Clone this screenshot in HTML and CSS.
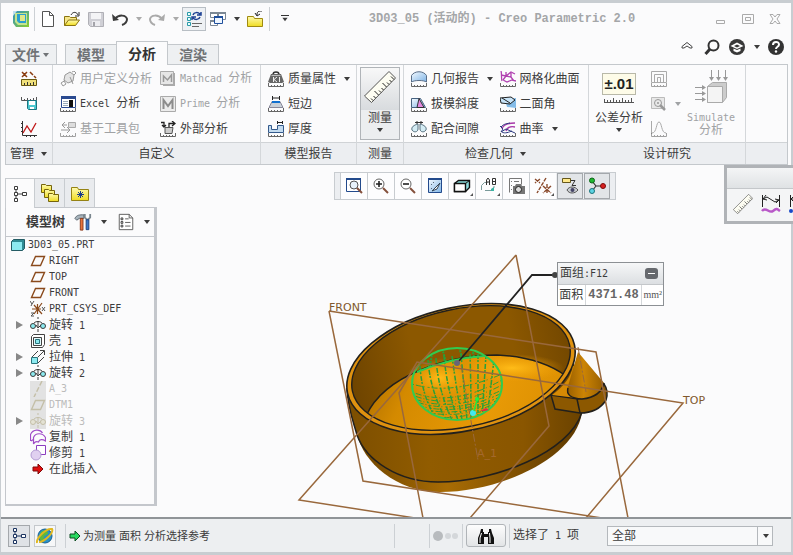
FILE: index.html
```html
<!DOCTYPE html>
<html lang="zh-CN">
<head>
    <meta charset="UTF-8">
    <meta name="viewport" content="width=device-width, initial-scale=1.0">
    <title>3D03_05 (活动的) - Creo Parametric 2.0</title>
    <link rel="stylesheet" href="styles.css">
</head>
<body>
<!-- 图标 -->
<svg class="sprite" aria-hidden="true">
    <defs>
        <linearGradient id="g-folder" x1="0" y1="0" x2="0" y2="1"><stop offset="0" stop-color="#fffbb0"/><stop offset="1" stop-color="#f0dc20"/></linearGradient>
        <linearGradient id="g-logo" x1="0" y1="0" x2="1" y2="1"><stop offset="0" stop-color="#2f8fc4"/><stop offset="1" stop-color="#8ccf2c"/></linearGradient>
        <linearGradient id="g-blue" x1="0" y1="0" x2="1" y2="1"><stop offset="0" stop-color="#f4faff"/><stop offset="1" stop-color="#7fb4e6"/></linearGradient>
    </defs>
    <symbol id="ticks" viewBox="0 0 16 16"><path d="M.5 12v3.5h15V12M3.5 14v1M6.5 14v1M9.5 14v1M12.5 14v1" fill="none" stroke="#666"/></symbol>
    <symbol id="down" viewBox="0 0 8 8"><path d="M1 2h6L4 6z" fill="currentColor"/></symbol>
    <symbol id="logo" viewBox="0 0 16 16"><path d="M0 0h16v16H3L0 12z" fill="url(#g-logo)"/><path d="M2 2h12v12H5L2 11z" fill="#c4e48c"/><path d="M4 3h9v9H6L4 10z" fill="#2a9fd0"/><path d="M7 4h5v6H7z" fill="#e0e888"/><path d="M0 0h4l-4 5z" fill="#bfe0f0"/></symbol>
    <symbol id="new" viewBox="0 0 16 16"><path d="M2.5.5h7l4 4v11h-11z" fill="#fff" stroke="#555"/><path d="M9.5.5v4h4" fill="none" stroke="#555"/></symbol>
    <symbol id="open" viewBox="0 0 16 16"><path d="M.5 14.5v-9h5l1 1h6v3" fill="#f6e68a" stroke="#8a7410"/><path d="M.5 14.5l4-5.5h11l-4 5.5z" fill="url(#g-folder)" stroke="#8a7410"/><path d="M7 4c2-4 6-3 7 0m1-3v4h-4" fill="none" stroke="#333"/></symbol>
    <symbol id="save" viewBox="0 0 16 16"><path d="M.5 1.5h15v14h-13l-2-2z" fill="#d0d0d6" stroke="#b0b0b6"/><path d="M3 2h10v6H3z" fill="#f4f4f6"/><path d="M4 10h8v5H4z" fill="#ececf0"/><path d="M5 11h2v4H5z" fill="#a4a4aa"/></symbol>
    <symbol id="undo" viewBox="0 0 16 16"><path d="M3 8c4-5 11-4 12 0 0 3-2 5-5 6" fill="none" stroke="currentColor" stroke-width="2"/><path d="M0 3l1 7 6-1z" fill="currentColor"/></symbol>
    <symbol id="regen" viewBox="0 0 16 16"><path d="M1.500 1.500h3v3h-3zM1.500 6.500h3v3h-3zM1.500 11.500h3v3h-3z" fill="#e8ffff" stroke="#2a9aa8"/><path d="M7 4c1-3 5-3 7-1m1-2v3h-4M14 6c-1 3-5 3-7 1M6 9V6h4" fill="none" stroke="#1b3f92" stroke-width="1.5"/><path d="M6 12.500h10M6 15.500h7" stroke="#666"/></symbol>
    <symbol id="windows" viewBox="0 0 16 16"><path d="M.5 1.5h8v5h-8zM7.5 2.5h8v6h-8zM.5 9.500h7v5h-7z" fill="#fff" stroke="#7c8894"/><path d="M0 1h9v2H0zM8 1h8v2H8zM0 9h8v2H0z" fill="#7c8894"/><path d="M4.500 5.500h8v7h-8z" fill="#eef6ff" stroke="#1f4f9c"/><path d="M4 5h9v2H4z" fill="#1f4f9c"/></symbol>
    <symbol id="closefolder" viewBox="0 0 16 16"><path d="M.5 15.500v-10h6l1 2h8v8z" fill="url(#g-folder)" stroke="#a08a10"/><path d="M15 0c-4 0-5 1-5 4m-2-2l2 3 3-2" fill="none" stroke="#222"/></symbol>
    <symbol id="collapse" viewBox="0 0 16 16"><path d="M3 7.500l5-4 5 4v1.500h-2L8 7l-3 2H3z" fill="none" stroke="#444"/></symbol>
    <symbol id="search" viewBox="0 0 16 16"><circle cx="9.500" cy="6.500" r="5" fill="none" stroke="#333" stroke-width="2"/><path d="M6 10l-4.500 5" stroke="#333" stroke-width="3"/></symbol>
    <symbol id="learn" viewBox="0 0 16 16"><circle cx="8" cy="8" r="8" fill="#383838"/><path d="M1.500 7L8 3.500 14.500 7 8 10z" fill="#fff"/><path d="M4.500 9.500L8 11l3.500-1.500V12L8 13.500 4.500 12z" fill="#fff"/><path d="M5 7l3-1.500L11 7 8 8.500z" fill="#383838"/></symbol>
    <symbol id="help" viewBox="0 0 16 16"><circle cx="8" cy="8" r="8" fill="#333"/><path d="M5 6c0-4 6-4 6-.5C11 8 8 7.500 8 10" fill="none" stroke="#fff" stroke-width="2"/><circle cx="8" cy="12.500" r="1.200" fill="#fff"/></symbol>
    <symbol id="min" viewBox="0 0 12 12"><path d="M1.500 7.500h8v3h-8z" fill="none" stroke="#aaa"/></symbol>
    <symbol id="max" viewBox="0 0 12 12"><path d="M.5 1.500h11v9H.5zM3.500 4.500h5v3h-5z" fill="none" stroke="#aaa"/></symbol>
    <symbol id="close" viewBox="0 0 12 12"><path d="M1 1.500h3l2 2.500 2-2.500h3L8 6l3 4.500H8L6 8l-2 2.500H1L4 6z" fill="none" stroke="#aaa"/></symbol>

    <symbol id="m-units" viewBox="0 0 16 16"><path d="M1 1l5 5M6 1L1 6M9 1l3 3m1 1l2 2" stroke="#8a3c10" stroke-width="1.5"/><path d="M.5 8.500h15v6H.5z" fill="#f0e07a" stroke="#6a5a10"/><path d="M3.500 12v2M6.500 11v3M9.500 12v2M12.500 11v3" stroke="#333"/></symbol>
    <symbol id="m-save" viewBox="0 0 16 16"><path d="M.5 1v3.500h15V1M3.500 3v1M6.500 2v2M9.500 3v1M12.500 2v2" fill="none" stroke="#555"/><path d="M6.500 4.500h9v9h-8l-1-1z" fill="#4cc8d0" stroke="#1c7480"/><path d="M8 5h6v4H8zM9 11h4v2H9z" fill="#fff"/></symbol>
    <symbol id="m-graph" viewBox="0 0 16 16"><path d="M1.500 0v14.500H16M0 2.500h1M0 6.500h1M0 10.500h1M5.500 15v1M9.500 15v1M13.500 15v1" stroke="#333" fill="none"/><path d="M2 12l4-7 4 6 5-9" stroke="#c01818" stroke-width="1.300" fill="none"/></symbol>
    <symbol id="user" viewBox="0 0 16 16"><path d="M5 4l5-3 4 3-1 6-5 2-4-3z" fill="#e4e4e4" stroke="#999"/><path d="M1 12l3-2 2 3-3 2zM12 1l2-1 2 2-2 2M5 9l-2 2M10 6l3 7" fill="none" stroke="#999"/></symbol>
    <symbol id="excel" viewBox="0 0 16 16"><path d="M1.500 1.500h14v10h-14z" fill="#fff" stroke="#2a4a90"/><path d="M1 0h15v3H1z" fill="#2a4a90"/><path d="M3 5.500h5M3 7.500h5M3 9.500h5" stroke="#9ab"/><path d="M9 4h4v7H9z" fill="#111"/><use href="#ticks"/></symbol>
    <symbol id="toolkit" viewBox="0 0 16 16"><path d="M8.500 1.500h7v5h-7z" fill="#ddd" stroke="#aaa"/><path d="M7 4H2m3-3L2 4l3 3M1 9h9M7 6l3 3-3 3" stroke="#999" fill="none"/><use href="#ticks" opacity=".6"/></symbol>
    <symbol id="mathcad" viewBox="0 0 16 16"><path d="M.5.5h13v13H.5z" fill="#e6e6e6" stroke="#aaa"/><path d="M13 2h2v13H3v-2h10z" fill="#aaa"/><path d="M3.500 11V5l4 4 4-5v7" stroke="#999" stroke-width="1.5" fill="none"/></symbol>
    <symbol id="prime" viewBox="0 0 16 16"><path d="M.5.5h15v15H.5z" fill="#ececec" stroke="#aaa"/><path d="M3.500 13V4L8 10l4.500-6v9" stroke="#8c8c8c" stroke-width="2" fill="none"/></symbol>
    <symbol id="external" viewBox="0 0 16 16"><path d="M5 6.500h8l-1 6H5z" fill="#ccc" stroke="#555"/><path d="M1 1.500h3v4M2 4l2 2 2-2M9 6V2.500h5M12 0l3 2.500L12 5" stroke="#222" stroke-width="1.300" fill="none"/><use href="#ticks"/></symbol>
    <symbol id="mass" viewBox="0 0 16 16"><path d="M5 3.500C5 0 11 0 11 3.500" stroke="#333" stroke-width="1.5" fill="none"/><path d="M3 3h10l3 8-2 1H2l-2-1z" fill="#666"/><path d="M3 4h10l-1 1H4z" fill="#bbb"/><path d="M5.500 6v5M9 6L6 8.500 9 11M11.500 6v5" stroke="#eee" fill="none"/><use href="#ticks"/></symbol>
    <symbol id="short" viewBox="0 0 16 16"><path d="M4.500 0v4M11.500 0v4M5 2h6" stroke="#222"/><path d="M4 5.500h8l3 6H1z" fill="#c8d0d8" stroke="#889"/><path d="M4 6h8" stroke="#1070d0" stroke-width="2"/><use href="#ticks"/></symbol>
    <symbol id="thick" viewBox="0 0 16 16"><path d="M.5 4.500h3v4h6v-4h6v7H.5z" fill="#c4dcf0" stroke="#345a8c"/><path d="M9.500 0v3M14.500 0v3M10 1.500h4" stroke="#222"/><use href="#ticks"/></symbol>
    <symbol id="geom" viewBox="0 0 16 16"><path d="M.5 11V4.500c3-5 12-5 15 0V11c-3-2-12-2-15 0z" fill="url(#g-blue)" stroke="#5a6e88"/><use href="#ticks"/></symbol>
    <symbol id="draft" viewBox="0 0 16 16"><path d="M.5 2.500h9l5 9H.5z" fill="url(#g-blue)" stroke="#46617e"/><path d="M8 2.500l5 9H6z" fill="#e58ae0" stroke="#333"/><use href="#ticks"/></symbol>
    <symbol id="clear" viewBox="0 0 16 16"><path d="M7 3c-4 1-7 3-6 6 2 3 6 2 6-1zM9 3c4 1 7 3 6 6-2 3-6 2-6-1z" fill="#d4ecf4" stroke="#56707e"/><path d="M4 1.500h8M6 0v3M10 0v3" stroke="#333"/><use href="#ticks"/></symbol>
    <symbol id="mesh" viewBox="0 0 16 16"><path d="M1 0c1 3 0 6 1 10m-1-6l5 1 5-4 4 2M6 1v4l-3 4m3-4l5 1 3 4m-3-4V2m-8 7l4 2 5-2 4 1" fill="none" stroke="#b040b0" stroke-width="1.300"/><use href="#ticks"/></symbol>
    <symbol id="dihedral" viewBox="0 0 16 16"><path d="M5 3l11-1v10L7 11z" fill="#84bce8"/><path d="M0 2l11-1 4 3-5 4-9-1z" fill="#c8e4f8" stroke="#222"/><path d="M2 2l8 5" stroke="#222"/><use href="#ticks"/></symbol>
    <symbol id="curv" viewBox="0 0 16 16"><path d="M15 2C8 2 3 4 2 8M15 6c-5-1-8 1-9 4" fill="none" stroke="#a838a8" stroke-width="1.300"/><path d="M0 5l3 3-2 3 5-3 9 4M1 6c3-3 4-3 9-4M2 11c3 2 7 0 10-1" fill="none" stroke="#2e3b80"/><use href="#ticks"/></symbol>
    <symbol id="sens" viewBox="0 0 16 16"><path d="M.5.5h15v11H.5zM3.500 11V3.500h9v8M6.500 11V6.500h3v5" fill="none" stroke="#aaa"/><use href="#ticks" opacity=".6"/></symbol>
    <symbol id="feas" viewBox="0 0 16 16"><path d="M.5 1.500h13v11H.5z" fill="#e8e8e8" stroke="#bbb"/><circle cx="7" cy="7" r="3.500" fill="none" stroke="#999"/><circle cx="7" cy="7" r="1" fill="#999"/><path d="M9 9l5 5" stroke="#999" stroke-width="2.500"/></symbol>
    <symbol id="stat" viewBox="0 0 16 16"><path d="M1 12C6 12 5 1 8 1s2 11 7 11M.5 0v13" fill="none" stroke="#aaa"/><use href="#ticks" opacity=".6"/></symbol>
    <symbol id="simulate" viewBox="0 0 36 36"><path d="M14.500 16.500l5-4h14v15l-4 5h-15z" fill="#ccc" stroke="#aaa"/><path d="M14.500 16.500h15v16h-15z" fill="#f4f4f4" stroke="#aaa"/><path d="M18.500 0v9M25.500 0v9M32.500 0v9M2 17.500h9M2 23.500h9M2 29.500h9" stroke="#999"/><path d="M16 7h5l-2.500 4zM23 7h5l-2.500 4zM30 7h5l-2.500 4zM9 15v5l4-2.500zM9 21v5l4-2.500zM9 27v5l4-2.500z" fill="#999"/></symbol>
    <symbol id="ruler" viewBox="0 0 32 32"><path d="M.5 25L25 .5l6.500 6.500L7.500 31.500z" fill="#fdfdf2" stroke="#555"/><path d="M9 29.500l-2-2M11.500 27l-2-2M14.500 24l-4-4M17 21.500l-2-2M19.500 19l-2-2M22.500 16l-4-4M25 13.500l-2-2M27.500 11l-2-2M30 8.500l-3-3" stroke="#222"/></symbol>
    <symbol id="curvelen" viewBox="0 0 20 20"><path d="M1.500 1v12M18.500 1v12M2 5l4-2 8 5 4-2M5 1L2 5l4 1M15 9l3-3-4-1" fill="none" stroke="#222"/><path d="M1 17c4-5 7 3 11 0s4-2 7 0" fill="none" stroke="#b858c8" stroke-width="2.500"/></symbol>
    <symbol id="dist" viewBox="0 0 20 20"><path d="M1.500 1v12M2 5h9M5 2L2 5l3 3" fill="none" stroke="#222"/><circle cx="2" cy="17" r="2" fill="#1848c8"/><path d="M4 17h14" stroke="#1848c8" stroke-width="2"/></symbol>

    <symbol id="treeicon" viewBox="0 0 16 16"><path d="M4 3v10M4 8h7" stroke="currentColor"/><path d="M2.500.5h3v3h-3zM2.500 6.500h3v3h-3zM2.500 12.500h3v3h-3zM10.500 6.500h4v3h-4z" fill="#fff" stroke="currentColor"/></symbol>
    <symbol id="folders" viewBox="0 0 20 20"><g fill="url(#g-folder)" stroke="#75640c"><path d="M1.500 9.500v-8h4l1 1h5v7z"/><path d="M4.500 14.500v-8h4l1 1h5v7z"/><path d="M8.500 18.500v-8h4l1 1h5v7z"/></g></symbol>
    <symbol id="fav" viewBox="0 0 20 20"><path d="M1.500 17.500v-13h6l1 2h10v11z" fill="url(#g-folder)" stroke="#958214"/><path d="M10.500 8v7M7 11.500h7M8 9l5 5M13 9l-5 5" stroke="#1c3c8c"/></symbol>
    <symbol id="hammer" viewBox="0 0 20 20"><path d="M1 6c2-4 5-4 10-4v4H6L3 8z" fill="#a8b4bc" stroke="#56626c"/><path d="M7 6h3v13H7z" fill="#e8743c" stroke="#883818"/><path d="M12 1v4l2 2h2l2-2V1" stroke="#7a868e" stroke-width="2" fill="none"/><path d="M13.500 7.500h3v11h-3z" fill="#3c78c8" stroke="#1a3e7c"/></symbol>
    <symbol id="list" viewBox="0 0 20 20"><path d="M2.500 1.500h11l4 4v13h-15z" fill="#fff" stroke="#555"/><path d="M13.500 1.500v4h4M9 6.500h4M9 10.500h6M9 14.500h6" stroke="#555" fill="none"/><path d="M4.500 5.500h2v2h-2zM4.500 9.500h2v2h-2zM4.500 13.500h2v2h-2z" fill="none" stroke="#333"/></symbol>
    <symbol id="part" viewBox="0 0 14 14"><path d="M.5 3.500l2-2h11v9l-2 2H.5z" fill="#2f8c94" stroke="#245c64"/><path d="M1 4h10v8H1z" fill="#8ceaf0"/></symbol>
    <symbol id="plane" viewBox="0 0 16 16"><path d="M5.500 3.500h9l-4 9h-9z" fill="none" stroke="currentColor" stroke-width="1.400"/></symbol>
    <symbol id="csys" viewBox="0 0 16 16"><path d="M2 8h9M4 4l8 9M12 2L4 13M7.500 3v10" stroke="#8a4a1c" stroke-width="1.200"/><path d="M0 0l2 3 2-3M2 3l-1 2M12 6l3 4M15 6l-3 4M1 12h3l-3 3h3" fill="none" stroke="#555"/></symbol>
    <symbol id="revolve" viewBox="0 0 16 16"><circle cx="3" cy="9" r="2.500" fill="var(--fill)" stroke="currentColor"/><circle cx="13" cy="9" r="2.500" fill="var(--fill)" stroke="currentColor"/><path d="M8 0v2M8 4v6M8 12v3M4 6c2-2 6-2 8 0M6 8l2 3 3-3" fill="none" stroke="currentColor"/></symbol>
    <symbol id="shell" viewBox="0 0 16 16"><path d="M1.500 3.500l2-2h11v10l-2 3h-11z" fill="#fff" stroke="#444"/><path d="M3.500 4.500h8v8h-8z" fill="#e4fafc" stroke="#444"/><path d="M5.500 6.500h4v4h-4z" fill="#8ceaf0" stroke="#2a747c"/></symbol>
    <symbol id="extrude" viewBox="0 0 16 16"><path d="M1.500 8.500h6v6h-6z" fill="#8ceaf0" stroke="#2a747c"/><path d="M2 8l6-6M8 14l6-6M8 8l6-6M10 1.500h4.500V6" fill="none" stroke="#444"/></symbol>
    <symbol id="axis" viewBox="0 0 16 16"><path d="M12 0L4 16" stroke="currentColor" stroke-width="1.5" stroke-dasharray="5 2"/></symbol>
    <symbol id="copy" viewBox="0 0 16 16"><path d="M.5 12V5.500C3 0 10 0 12.500 4M3.500 15V8.500c2-5 9-5 12 0V12c-3-2-6-2-7 1-2-1-4 0-5 2zM1 12l3-2" fill="none" stroke="#a04cc8" stroke-width="1.200"/></symbol>
    <symbol id="trim" viewBox="0 0 16 16"><path d="M6.500.5h9v9h-9z" fill="#fff" stroke="#8c3cc0"/><circle cx="6" cy="10" r="5" fill="#e0d0f0" stroke="#b49cd4"/></symbol>
    <symbol id="insert" viewBox="0 0 16 16"><path d="M3 6h5V3l5 5-5 5v-3H3z" fill="#e01010" stroke="#800808"/></symbol>

    <symbol id="zoomfit" viewBox="0 0 18 18"><path d="M1.500 2.500h14v12h-14z" fill="#fff" stroke="#234a8c"/><path d="M1 1h15v2H1z" fill="#234a8c"/><circle cx="9" cy="8" r="4" fill="#e8f2fa" stroke="#555"/><path d="M12 11l5 5" stroke="#84503c" stroke-width="2"/></symbol>
    <symbol id="zoomin" viewBox="0 0 18 18"><circle cx="7" cy="7" r="5" fill="#fff" stroke="#666"/><path d="M4 7h6M7 4v6" stroke="#222" stroke-width="1.600"/><path d="M11 11l5 5" stroke="#84503c" stroke-width="2"/></symbol>
    <symbol id="zoomout" viewBox="0 0 18 18"><circle cx="7" cy="7" r="5" fill="#fff" stroke="#666"/><path d="M4 7h6" stroke="#222" stroke-width="1.600"/><path d="M11 11l5 5" stroke="#84503c" stroke-width="2"/></symbol>
    <symbol id="repaint" viewBox="0 0 18 18"><path d="M2.500 2.500h13v13h-13z" fill="url(#g-blue)" stroke="#234a8c"/><path d="M2 1h14v2H2z" fill="#234a8c"/><path d="M14 6l-3 6-5 2 3-3z" stroke="#345" fill="#fff"/><path d="M5 7l1 1M7 5l1 1M5 11l1 1" stroke="#567"/></symbol>
    <symbol id="shade" viewBox="0 0 18 18"><path d="M1.500 6.500l4-3h11v7l-4 4h-11z" fill="#8cdcdc" stroke="#111" stroke-width="1.400"/><path d="M1.500 6.500h11v8h-11z" fill="#fff" stroke="#111" stroke-width="1.400"/><path d="M12.500 6.500l4-3" stroke="#111"/></symbol>
    <symbol id="views" viewBox="0 0 18 18"><path d="M1.500 13V8.500l3-3h3M5 13.500h6l3-3V9" fill="none" stroke="#7a9a9a"/><path d="M11 12l3-2v4h-3z" fill="#3cb4a4"/><path d="M6.500 8V3l1.500-2 1.500 2v5M7 5h2.500M12.500 1.500h3v6h-3zM12.500 4.500h3" fill="none" stroke="#333"/></symbol>
    <symbol id="viewmgr" viewBox="0 0 18 18"><path d="M2.500 15.500v-14h12v6M4 4.500h1M4 8.500h1M4 12.500h1M7 4.500h5" fill="none" stroke="#777"/><path d="M6 9h2l1-2h5l1 2h3v8H6z" fill="#777"/><circle cx="11.500" cy="12.500" r="3" fill="#ddd" stroke="#222"/></symbol>
    <symbol id="datum" viewBox="0 0 18 18"><path d="M1 2l5 4M6 2L1 6M12 1L3 16M9 9l8 7M17 9l-8 7M13 7v10" stroke="#8a4a2c" stroke-width="1.400" stroke-dasharray="4 1"/></symbol>
    <symbol id="annot" viewBox="0 0 18 18"><path d="M1.500 1.500h8v4h-8z" fill="#ffe98c" stroke="#66581c"/><path d="M10 3.500h4l-3 5h4" fill="none" stroke="#333"/><path d="M6 13c2-4 8-4 11 0-3 4-9 4-11 0z" fill="#c8ccd0" stroke="#555"/><circle cx="11.500" cy="13" r="2" fill="#446"/></symbol>
    <symbol id="spin" viewBox="0 0 18 18"><path d="M4 4l4 5h7M8 9l-4 5" fill="none" stroke="#333" stroke-width="1.200"/><circle cx="4" cy="3.500" r="2.500" fill="#20b830" stroke="#0c6418"/><circle cx="4" cy="14" r="2.500" fill="#5cd4e4" stroke="#1c747c"/><circle cx="15" cy="9" r="2.500" fill="#d82020" stroke="#7c0c0c"/></symbol>
    <symbol id="globe" viewBox="0 0 18 18"><circle cx="9" cy="9" r="7" fill="#2890c8" stroke="#186090"/><path d="M5 5c3-3 7-1 7 1s-3 2-4 4 1 4-1 5-5-4-2-10z" fill="#60b83c"/><path d="M1 16C0 11 10 1 16 2c2 4-8 13-13 13" fill="none" stroke="#e0b820" stroke-width="2"/></symbol>
    <symbol id="go" viewBox="0 0 12 12"><path d="M1 4h5V1l5 5-5 5V8H1z" fill="#28d860" stroke="#0c4c20"/></symbol>
    <symbol id="binoc" viewBox="0 0 18 16"><path d="M4 1h2v3h1v2h4V4h1V1h2l1 4 2 5v6h-6V9H7v7H1v-6l2-5z" fill="#111"/><path d="M4.500 5L3 10v5M12.500 5l.5 5v5" stroke="#fff" fill="none"/></symbol>
</svg>

<div class="window">
    <header class="titlebar">
        <div class="quick">
            <button class="tool" aria-label="Creo"><svg class="icon"><use href="#logo"/></svg></button>
            <span class="sep"></span>
            <button class="tool" aria-label="新建"><svg class="icon"><use href="#new"/></svg></button>
            <button class="tool" aria-label="打开"><svg class="icon"><use href="#open"/></svg></button>
            <button class="tool" aria-label="保存"><svg class="icon"><use href="#save"/></svg></button>
            <button class="tool" aria-label="撤消"><svg class="icon"><use href="#undo"/></svg></button>
            <button class="drop dim" aria-label="撤消列表"><svg class="arrow"><use href="#down"/></svg></button>
            <button class="tool dim flip" aria-label="重做"><svg class="icon"><use href="#undo"/></svg></button>
            <button class="drop dim" aria-label="重做列表"><svg class="arrow"><use href="#down"/></svg></button>
            <button class="tool framed" aria-label="重新生成"><svg class="icon"><use href="#regen"/></svg></button>
            <button class="tool" aria-label="窗口"><svg class="icon"><use href="#windows"/></svg></button>
            <button class="drop" aria-label="窗口列表"><svg class="arrow"><use href="#down"/></svg></button>
            <button class="tool" aria-label="关闭窗口"><svg class="icon"><use href="#closefolder"/></svg></button>
            <span class="sep"></span>
            <button class="tool" aria-label="自定义"><svg class="arrow overflow"><use href="#down"/></svg></button>
        </div>
        <h1 class="title">3D03_05 (活动的) - Creo Parametric 2.0</h1>
        <div class="winbtns">
            <button aria-label="最小化"><svg><use href="#min"/></svg></button>
            <button aria-label="最大化"><svg><use href="#max"/></svg></button>
            <button aria-label="关闭"><svg><use href="#close"/></svg></button>
        </div>
    </header>

    <nav class="tabs">
        <button class="tab file">文件<svg class="arrow"><use href="#down"/></svg></button>
        <button class="tab">模型</button>
        <button class="tab active">分析</button>
        <button class="tab">渲染</button>
        <div class="tabtools">
            <button class="tool" aria-label="折叠功能区"><svg class="icon"><use href="#collapse"/></svg></button>
            <button class="tool" aria-label="搜索"><svg class="icon"><use href="#search"/></svg></button>
            <button class="tool" aria-label="学习"><svg class="icon"><use href="#learn"/></svg></button>
            <button class="drop" aria-label="学习列表"><svg class="arrow"><use href="#down"/></svg></button>
            <button class="tool" aria-label="帮助"><svg class="icon"><use href="#help"/></svg></button>
        </div>
    </nav>

    <section class="ribbon">
        <div class="group manage">
            <div class="body">
                <div class="col">
                    <button class="cmd" aria-label="单位"><svg class="icon"><use href="#m-units"/></svg></button>
                    <button class="cmd" aria-label="保存的分析"><svg class="icon"><use href="#m-save"/></svg></button>
                    <button class="cmd" aria-label="图形"><svg class="icon"><use href="#m-graph"/></svg></button>
                </div>
            </div>
            <button class="caption">管理<svg class="arrow"><use href="#down"/></svg></button>
        </div>
        <div class="group custom">
            <div class="body">
                <div class="col">
                    <button class="cmd off"><svg class="icon"><use href="#user"/></svg>用户定义分析</button>
                    <button class="cmd"><svg class="icon"><use href="#excel"/></svg><span><span class="en">Excel </span>分析</span></button>
                    <button class="cmd off"><svg class="icon"><use href="#toolkit"/></svg>基于工具包</button>
                </div>
                <div class="col">
                    <button class="cmd off"><svg class="icon"><use href="#mathcad"/></svg><span><span class="en">Mathcad </span>分析</span></button>
                    <button class="cmd off"><svg class="icon"><use href="#prime"/></svg><span><span class="en">Prime </span>分析</span></button>
                    <button class="cmd"><svg class="icon"><use href="#external"/></svg>外部分析</button>
                </div>
            </div>
            <div class="caption">自定义</div>
        </div>
        <div class="group report">
            <div class="body">
                <div class="col">
                    <button class="cmd"><svg class="icon"><use href="#mass"/></svg>质量属性<svg class="arrow"><use href="#down"/></svg></button>
                    <button class="cmd"><svg class="icon"><use href="#short"/></svg>短边</button>
                    <button class="cmd"><svg class="icon"><use href="#thick"/></svg>厚度</button>
                </div>
            </div>
            <div class="caption">模型报告</div>
        </div>
        <div class="group measure">
            <div class="body">
                <button class="big pressed">
                    <svg class="picture"><use href="#ruler"/></svg>
                    <span class="bigtext">测量<svg class="arrow"><use href="#down"/></svg></span>
                </button>
            </div>
            <div class="caption">测量</div>
        </div>
        <div class="group inspect">
            <div class="body">
                <div class="col">
                    <button class="cmd"><svg class="icon"><use href="#geom"/></svg>几何报告<svg class="arrow"><use href="#down"/></svg></button>
                    <button class="cmd"><svg class="icon"><use href="#draft"/></svg>拔模斜度</button>
                    <button class="cmd"><svg class="icon"><use href="#clear"/></svg>配合间隙</button>
                </div>
                <div class="col">
                    <button class="cmd"><svg class="icon"><use href="#mesh"/></svg>网格化曲面</button>
                    <button class="cmd"><svg class="icon"><use href="#dihedral"/></svg>二面角</button>
                    <button class="cmd"><svg class="icon"><use href="#curv"/></svg>曲率<svg class="arrow"><use href="#down"/></svg></button>
                </div>
            </div>
            <button class="caption">检查几何<svg class="arrow"><use href="#down"/></svg></button>
        </div>
        <div class="group study">
            <div class="body">
                <button class="big">
                    <span class="tol">±.01</span>
                    <svg class="scale" viewBox="0 0 30 6"><path d="M0 5.500h30M.5 2v3M3.500 3v2M6.500 3v2M9.500 1v4M12.500 3v2M15.500 3v2M18.500 1v4M21.500 3v2M24.500 3v2M27.500 1v4" stroke="#555"/></svg>
                    <span class="bigtext">公差分析<svg class="arrow"><use href="#down"/></svg></span>
                </button>
                <div class="col">
                    <button class="cmd off" aria-label="敏感度"><svg class="icon"><use href="#sens"/></svg></button>
                    <button class="cmd off" aria-label="可行性"><svg class="icon"><use href="#feas"/></svg><svg class="arrow"><use href="#down"/></svg></button>
                    <button class="cmd off" aria-label="统计"><svg class="icon"><use href="#stat"/></svg></button>
                </div>
                <button class="big off">
                    <svg class="picture sim"><use href="#simulate"/></svg>
                    <span class="bigtext tight"><span class="en">Simulate</span>分析</span>
                </button>
            </div>
            <div class="caption">设计研究</div>
        </div>
        <div class="group rest">
            <div class="body"></div>
            <div class="caption"></div>
        </div>
    </section>

    <main class="work">
        <aside class="side">
            <div class="sidetabs">
                <button class="active" aria-label="模型树"><svg class="icon"><use href="#treeicon"/></svg></button>
                <button aria-label="文件夹浏览器"><svg><use href="#folders"/></svg></button>
                <button aria-label="收藏夹"><svg><use href="#fav"/></svg></button>
            </div>
            <div class="panel">
                <div class="panelhead">
                    <h2>模型树</h2>
                    <button aria-label="设置"><svg class="mid"><use href="#hammer"/></svg><svg class="arrow"><use href="#down"/></svg></button>
                    <button aria-label="显示"><svg class="mid"><use href="#list"/></svg><svg class="arrow"><use href="#down"/></svg></button>
                </div>
                <ul class="tree">
                    <li class="root"><svg class="icon"><use href="#part"/></svg><span class="en">3D03_05.PRT</span></li>
                    <li class="brown"><svg class="icon"><use href="#plane"/></svg><span class="en">RIGHT</span></li>
                    <li class="brown"><svg class="icon"><use href="#plane"/></svg><span class="en">TOP</span></li>
                    <li class="brown"><svg class="icon"><use href="#plane"/></svg><span class="en">FRONT</span></li>
                    <li><svg class="icon"><use href="#csys"/></svg><span class="en">PRT_CSYS_DEF</span></li>
                    <li class="more"><svg class="icon"><use href="#revolve"/></svg><span>旋转<span class="en"> 1</span></span></li>
                    <li><svg class="icon"><use href="#shell"/></svg><span>壳<span class="en"> 1</span></span></li>
                    <li class="more"><svg class="icon"><use href="#extrude"/></svg><span>拉伸<span class="en"> 1</span></span></li>
                    <li class="more"><svg class="icon"><use href="#revolve"/></svg><span>旋转<span class="en"> 2</span></span></li>
                    <li class="hid"><svg class="icon"><use href="#axis"/></svg><span class="en">A_3</span></li>
                    <li class="hid"><svg class="icon"><use href="#plane"/></svg><span class="en">DTM1</span></li>
                    <li class="more hid"><svg class="icon"><use href="#revolve"/></svg><span>旋转<span class="en"> 3</span></span></li>
                    <li><svg class="icon"><use href="#copy"/></svg><span>复制<span class="en"> 1</span></span></li>
                    <li><svg class="icon"><use href="#trim"/></svg><span>修剪<span class="en"> 1</span></span></li>
                    <li><svg class="icon"><use href="#insert"/></svg><span>在此插入</span></li>
                </ul>
            </div>
        </aside>

        <div class="canvas">
            <svg class="scene" viewBox="158 165 633 352" preserveAspectRatio="xMidYMid slice" role="img" aria-label="3D03_05">
                <defs>
                    <linearGradient id="wall" x1="0" x2="1"><stop offset="0" stop-color="#6e4400"/><stop offset=".3" stop-color="#8c5800"/><stop offset=".75" stop-color="#8c5800"/><stop offset="1" stop-color="#744800"/></linearGradient>
                    <linearGradient id="body" x1="0" x2="1"><stop offset="0" stop-color="#7c4e00"/><stop offset=".35" stop-color="#915c00"/><stop offset=".75" stop-color="#8a5600"/><stop offset="1" stop-color="#6a4200"/></linearGradient>
                    <linearGradient id="base" x1="0" x2="1"><stop offset="0" stop-color="#6e4400"/><stop offset=".4" stop-color="#a86c04"/><stop offset="1" stop-color="#5c3800"/></linearGradient>
                    <linearGradient id="floor" x1="0" x2="1" y1=".4" y2=".6"><stop offset="0" stop-color="#b07000"/><stop offset=".2" stop-color="#d48a00"/><stop offset=".6" stop-color="#e89a06"/><stop offset="1" stop-color="#d88c00"/></linearGradient>
                    <radialGradient id="shine"><stop offset="0" stop-color="#ffbc18"/><stop offset="1" stop-color="#f0a008" stop-opacity="0"/></radialGradient>
                    <linearGradient id="cone" x1="0" x2="1"><stop offset="0" stop-color="#9a6000"/><stop offset=".45" stop-color="#cc8404"/><stop offset="1" stop-color="#965e00"/></linearGradient>
                    <clipPath id="inner"><ellipse cx="461" cy="368" rx="111" ry="59" transform="rotate(-12 461 368)"/></clipPath>
                    <clipPath id="ball"><ellipse cx="457" cy="384" rx="45" ry="36"/></clipPath>
                </defs>
                <!-- 碗体 -->
                <path d="M357 434C363 462 396 492 440 492C500 492 576 458 582 412L540 395z" fill="url(#base)"/>
                <path d="M347 383C348 410 353 420 357 435C366 460 398 482 438 482C495 482 570 452 582 412L572 350z" fill="url(#body)"/>
                <path d="M347 388C348 410 353 420 357 435C366 460 398 482 438 482C495 482 570 452 582 412" fill="none" stroke="#22201c" stroke-width="1.5"/>
                <ellipse cx="461" cy="369" rx="116" ry="62" transform="rotate(-12 461 369)" fill="#df9210" stroke="#22201c" stroke-width="1.600"/>
                <ellipse cx="461" cy="368" rx="111" ry="59" transform="rotate(-12 461 368)" fill="url(#wall)"/>
                <g clip-path="url(#inner)">
                    <path d="M366 416C385 374 450 355 497 355Q540 357 566 376L580 450H360z" fill="url(#floor)"/>
                    <ellipse cx="512" cy="368" rx="52" ry="14" fill="url(#shine)"/>
                    <ellipse cx="440" cy="378" rx="34" ry="20" fill="url(#shine)"/>
                    <path d="M366 416C385 374 450 355 497 355Q540 357 566 376" fill="none" stroke="#22201c" stroke-width="1.400"/>
                </g>
                <ellipse cx="461" cy="368" rx="111" ry="59" transform="rotate(-12 461 368)" fill="none" stroke="#22201c" stroke-width="1.400"/>
                <!-- 凸台和圆锥 -->
                <path d="M551 395L578 399Q598 397 604 384Q609 391 606 400Q598 413 580 413L555 409z" fill="#8c5800" stroke="#22201c" stroke-width="1.5"/>
                <path d="M573 366Q570 382 552 395L577 398Q596 397 604 385L590 370z" fill="#d68a04"/>
                <path d="M577 399L580 413" stroke="#22201c" stroke-width="1.5"/>
                <path d="M578 352L568 386Q564 398 582 399Q601 397 604 383z" fill="url(#cone)"/>
                <path d="M568 388Q565 398 582 399Q601 397 604 383" fill="none" stroke="#22201c" stroke-width="1.5"/>
                <!-- 曲面网格 -->
                <g clip-path="url(#ball)" fill="none" stroke="#28a038">
                    <path d="M420 366q2 34 20 58M428 360q2 30 18 60M436 358q2 32 16 62M444 356q3 34 14 64M452 356q4 30 10 64M461 354q3 34 6 66M470 354q1 30 1 66M478 354v66M486 354l-4 66M494 360l-6 50" stroke-width="1.5" stroke-dasharray="5 1 2 2"/>
                    <path d="M412 392q40 16 90-12M412 398q40 16 90-8M414 404q40 14 88-8M418 410q40 12 80-8M424 415q30 8 70-8M412 384q40 12 90-10M412 395q40 16 90-10M414 401q40 15 88-8M416 407q40 13 84-8" stroke-dasharray="2 2 6 2 1 3"/>
                    <path d="M430 366l2-12M446 362l-4-14M462 358l-3-12M474 357l-2-10" stroke-width="2" stroke-dasharray="2 1"/>
                </g>
                <g fill="none" stroke="#30cc50" stroke-width="2">
                    <ellipse cx="457" cy="384" rx="45" ry="36"/>
                    <path d="M417 372Q450 358 484 356"/>
                </g>
                <!-- 基准平面 -->
                <g fill="none" stroke="#99683c" stroke-width="1.5">
                    <path d="M329 311L596 352L628 518M329 311L363 481L602 518"/>
                    <path d="M516 255L299 500L415 518M516 255L549 426L470 518"/>
                    <path d="M423 518L399 393L417 362L683 403L586 518"/>
                    <path d="M461 365L478 460M578 347L586 392" stroke-dasharray="8 2 2 2" stroke-width="1"/>
                </g>
                <circle cx="473" cy="413" r="3" fill="#40e8f0"/>
                <path d="M474 411L477 400" stroke="#20e840" stroke-width="1.5"/>
                <circle cx="477" cy="399" r="2" fill="#20f040"/>
                <path d="M480 411l6-3 3 2-4 1z" fill="#e02848"/>
                <path d="M555 275H532L459 361" fill="none" stroke="#222" stroke-width="1.800"/>
                <circle cx="457" cy="363" r="3" fill="#667"/>
                <circle cx="555" cy="275" r="3" fill="#444"/>
                <g class="label">
                    <text x="329" y="311">FRONT</text>
                    <text x="683" y="404">TOP</text>
                    <text class="faint" x="477" y="457">A_1</text>
                </g>
            </svg>

            <div class="viewbar">
                <button aria-label="重新调整"><svg><use href="#zoomfit"/></svg></button>
                <button aria-label="放大"><svg><use href="#zoomin"/></svg></button>
                <button aria-label="缩小"><svg><use href="#zoomout"/></svg></button>
                <button aria-label="重画"><svg><use href="#repaint"/></svg></button>
                <button class="menu" aria-label="显示样式"><svg><use href="#shade"/></svg></button>
                <button class="menu" aria-label="已保存方向"><svg><use href="#views"/></svg></button>
                <button aria-label="视图管理器"><svg><use href="#viewmgr"/></svg></button>
                <button class="menu" aria-label="基准显示"><svg><use href="#datum"/></svg></button>
                <button class="on" aria-label="注释显示"><svg><use href="#annot"/></svg></button>
                <button class="on" aria-label="旋转中心"><svg><use href="#spin"/></svg></button>
            </div>

            <div class="callout">
                <div class="callhead"><span>面组<span class="en">:F12</span></span><button aria-label="折叠"></button></div>
                <table>
                    <tr><th>面积</th><td class="value">4371.48</td><td class="unit">mm²</td></tr>
                </table>
            </div>

            <div class="palette">
                <div class="palhead"></div>
                <div class="palbody">
                    <button aria-label="测量汇总"><svg><use href="#ruler"/></svg></button>
                    <button aria-label="长度"><svg><use href="#curvelen"/></svg></button>
                    <button aria-label="距离"><svg><use href="#dist"/></svg></button>
                </div>
            </div>
        </div>
    </main>

    <footer class="status">
        <button class="sbtn on" aria-label="模型树显示"><svg class="icon"><use href="#treeicon"/></svg></button>
        <button class="sbtn" aria-label="浏览器"><svg><use href="#globe"/></svg></button>
        <span class="sep"></span>
        <p class="message"><svg><use href="#go"/></svg>为测量 面积 分析选择参考</p>
        <div class="statright">
            <span class="sep"></span>
            <span class="sep"></span>
            <svg class="dots" viewBox="0 0 26 12"><circle cx="5" cy="6" r="5" fill="#b8bbbe"/><circle cx="15" cy="6" r="3" fill="#d4d7da"/><circle cx="22" cy="6" r="3" fill="#d4d7da"/></svg>
            <span class="sep"></span>
            <button class="find" aria-label="查找"><svg><use href="#binoc"/></svg></button>
            <span class="sep"></span>
            <label for="filter">选择了<span class="en"> 1 </span>项</label>
            <div class="pick">
                <select id="filter"><option>全部</option></select>
                <svg class="arrow"><use href="#down"/></svg>
            </div>
        </div>
    </footer>
</div>
</body>
</html>
```
FILE: styles.css
```css
*{margin:0;padding:0;box-sizing:border-box;}
html,body{
    height:100%;
    overflow:hidden;
}
body{
    font-family:"Liberation Sans","Noto Sans CJK SC",sans-serif;
    font-size:12px;
    line-height:16px;
    color:#3c3c3c;
}
button{
    border:0;
    background:none;
    font:inherit;
    color:inherit;
    display:flex;
    align-items:center;
    justify-content:center;
}
svg{
    display:block;
    flex:none;
}
.sprite{
    position:absolute;
    width:0;
    height:0;
}
.icon{
    width:16px;
    height:16px;
}
.arrow{
    width:8px;
    height:8px;
}
.en{
    font-family:"DejaVu Sans Mono",monospace;
    font-size:10px;
    white-space:pre;
}
.window{
    height:100%;
    display:flex;
    flex-direction:column;
    background:#fbfbfc;
    border:solid #c8cdd1;
    border-width:3px 2px 3px 1px;
}

/* 标题栏 */
.titlebar{
    height:31px;
    display:flex;
    align-items:center;
    padding:0 3px 0 8px;
}
.quick{
    display:flex;
    align-items:center;
}
.tool{
    width:24px;
    height:24px;
}
.drop{
    width:13px;
    height:24px;
}
.titlebar .dim{
    color:#aaa;
}
.flip svg{
    transform:scaleX(-1);
}
.framed{
    border:1px solid #b8bec4;
    background:#eef1f4;
}
.sep{
    width:1px;
    height:24px;
    margin:0 1px;
    background:#ccd0d4;
}
.quick .sep:last-of-type{
    margin:0 3px 0 2px;
}
.overflow{
    border-top:1px solid #333;
}
.title{
    flex:1;
    text-align:center;
    font:bold 12px/16px "Liberation Mono","Noto Sans CJK SC",monospace;
    color:#a4a6a8;
    white-space:nowrap;
}
.winbtns{
    display:flex;
}
.winbtns button{
    width:27px;
    height:24px;
}
.winbtns svg{
    width:12px;
    height:12px;
}

/* 选项卡 */
.tabs{
    height:30px;
    display:flex;
    align-items:flex-end;
    padding-left:4px;
}
.tab{
    width:52px;
    height:20px;
    border:1px solid #c4c8cc;
    border-bottom:0;
    background:#eef0f2;
    color:#707376;
    font-weight:bold;
    font-size:14px;
}
.tab.file{
    margin-right:8px;
    gap:2px;
}
.tab.active{
    height:24px;
    margin:0 -1px -1px;
    background:#fbfbfc;
    color:#333;
    position:relative;
}
.tabtools{
    margin-left:auto;
    padding:0 3px 5px 0;
    display:flex;
    gap:1px;
}

/* 功能区 */
.ribbon{
    display:flex;
    margin:0 3px 0 4px;
    border:1px solid #c4c8cc;
}
.group{
    display:flex;
    flex-direction:column;
    border-right:1px solid #d4d7da;
}
.body{
    height:77px;
    padding:1px 0 1px 7px;
    display:flex;
}
.caption{
    height:22px;
    border-top:1px solid #d0d3d6;
    background:#eceef1;
    display:flex;
    align-items:center;
    justify-content:center;
    gap:6px;
}
.manage{
    width:47px;
}
.manage .body{
    padding-left:15px;
}
.report{
    width:96px;
}
.measure{
    width:47px;
}
.measure .body{
    padding:2px 3px;
}
.inspect{
    width:185px;
}
.study{
    width:157px;
}
.study .body{
    padding-left:5px;
}
.rest{
    flex:1;
    border-right:0;
}
.cmd{
    height:25px;
    gap:4px;
    justify-content:flex-start;
    white-space:nowrap;
}
.cmd .arrow{
    margin-left:3px;
}
.custom .col{
    width:100px;
}
.inspect .col{
    width:90px;
}
.off{
    color:#a0a2a4;
}
.big{
    flex-direction:column;
    justify-content:flex-start;
    width:50px;
}
.bigtext{
    display:flex;
    flex-direction:column;
    align-items:center;
    white-space:nowrap;
}
.tight{
    line-height:12px;
}
.pressed{
    width:40px;
    border:1px solid #b0b4b8;
    background:linear-gradient(#f8f8f8,#d8dbde 42px,#eceef0 42px);
}
.picture{
    width:32px;
    height:32px;
    margin:3px 0 7px;
}
.sim{
    width:40px;
    height:36px;
    margin:4px 0 6px;
}
.tol{
    margin-top:7px;
    padding:0 1px;
    border:1px solid #b8b8a8;
    background:#fdfbe8;
    color:#222;
    font:bold 15px/20px "Liberation Sans",sans-serif;
}
.scale{
    width:30px;
    height:6px;
    margin:2px 0 7px;
}
.study .col{
    width:42px;
    padding-left:7px;
}

/* 工作区 */
.work{
    flex:1;
    min-height:0;
    display:flex;
}
.side{
    width:157px;
    padding:13px 1px 11px 4px;
    display:flex;
    flex-direction:column;
}
.sidetabs{
    display:flex;
    height:29px;
}
.sidetabs button{
    width:30px;
    border:1px solid #c8ccd0;
    border-left-width:0;
    border-bottom:0;
    background:#e9ebee;
}
.sidetabs button.active{
    border-left-width:1px;
    margin-bottom:-1px;
    background:#fbfbfc;
    position:relative;
}
.sidetabs svg{
    width:20px;
    height:20px;
}
.sidetabs .icon{
    width:16px;
    height:16px;
}
.panel{
    flex:1;
    border:1px solid #c4c7cc;
    border-right-width:3px;
    border-bottom-width:2px;
}
.panelhead{
    height:29px;
    border-bottom:1px solid #c4c7cc;
    display:flex;
    align-items:center;
    padding-left:20px;
    gap:9px;
}
.panelhead h2{
    font-size:13px;
    line-height:16px;
}
.panelhead button{
    gap:8px;
}
.mid{
    width:18px;
    height:20px;
}
.tree{
    list-style:none;
    --fill:#8ceaf0;
}
.tree li{
    height:16px;
    display:flex;
    align-items:center;
    gap:3px;
    padding-left:24px;
    position:relative;
    white-space:nowrap;
}
.tree .root{
    padding-left:5px;
}
.tree .root .icon{
    width:14px;
    height:14px;
}
.tree .brown .icon{
    color:#8a4a1c;
}
.tree .hid{
    color:#bbb;
    --fill:#e4e2d4;
}
.tree .hid .icon{
    background:#e2e2e2;
    color:#c4bfa8;
}
.tree .more::before{
    content:"";
    position:absolute;
    left:10px;
    top:4px;
    border:solid transparent;
    border-width:4px 0 4px 7px;
    border-left-color:#888;
}
.canvas{
    flex:1;
    position:relative;
    min-width:0;
}
.scene{
    width:100%;
    height:100%;
}
.label{
    font:11px "DejaVu Sans",sans-serif;
    fill:#80582c;
}
.faint{
    fill:#a4682c;
}
.viewbar{
    position:absolute;
    top:7px;
    left:50%;
    transform:translateX(-50%);
    display:flex;
    border:1px solid #c8ccd0;
    padding:0 5px;
    background:#eceef1;
}
.viewbar button{
    width:27px;
    height:26px;
    background:#fdfdfe;
    border-left:1px solid #c8ccd0;
    position:relative;
}
.viewbar svg{
    width:18px;
    height:18px;
}
.viewbar .menu::after{
    content:"";
    position:absolute;
    right:2px;
    bottom:3px;
    border-top:3px solid transparent;
    border-right:3px solid #555;
}
.viewbar .on{
    width:26px;
    margin-left:1px;
    background:#e2e5e8;
    border:1px solid #a4a8ac;
}
.callout{
    position:absolute;
    left:399px;
    top:97px;
    width:107px;
    border:1px solid #8c9094;
    background:#fff;
}
.callhead{
    height:22px;
    display:flex;
    align-items:center;
    justify-content:space-between;
    padding:0 5px 0 2px;
    background:linear-gradient(#f6f7f8,#dcdfe2);
    border-bottom:1px solid #c4c7ca;
}
.callhead button{
    width:13px;
    height:11px;
    border-radius:3px;
    background:#66696e;
}
.callhead button::before{
    content:"";
    width:7px;
    height:1px;
    background:#fff;
}
.callout table{
    width:100%;
    border-collapse:collapse;
}
.callout th,.callout td{
    height:20px;
    text-align:center;
    font-weight:normal;
}
.callout td{
    border-left:1px solid #d4d7da;
}
.callout .value{
    font:bold 12px/16px "Liberation Mono",monospace;
    color:#666;
}
.callout .unit{
    font-family:"Liberation Serif",serif;
    font-size:10px;
    color:#555;
}
.palette{
    position:absolute;
    top:0;
    right:-2px;
    width:69px;
    height:59px;
    border:3px solid #b0b3b7;
    border-right:0;
    background:#f4f5f6;
    overflow:hidden;
}
.palhead{
    height:21px;
    background:linear-gradient(#f4f5f6,#dfe2e4);
    border-bottom:1px solid #c4c7ca;
}
.palbody{
    display:flex;
    gap:8px;
    padding:5px 0 0 6px;
}
.palbody svg{
    width:20px;
    height:20px;
}

/* 状态栏 */
.status{
    height:35px;
    border-top:2px solid #909498;
    background:#edeff1;
    display:flex;
    align-items:center;
    padding:0 18px 0 7px;
}
.status .sep{
    margin:0;
}
.sbtn{
    width:22px;
    height:22px;
    margin-right:4px;
    border:1px solid #c4c8cc;
    background:#f6f7f8;
    color:#1c3460;
}
.sbtn.on{
    background:#dfe2e6;
    border-color:#a4a8ac;
}
.sbtn svg{
    width:18px;
    height:18px;
}
.sbtn .icon{
    width:16px;
    height:16px;
}
.status .sbtn + .sep{
    margin:0 3px 0 5px;
}
.message{
    display:flex;
    align-items:center;
    gap:2px;
    font-size:11px;
}
.message svg{
    width:12px;
    height:12px;
}
.statright{
    margin-left:auto;
    display:flex;
    align-items:center;
    gap:3px;
    white-space:nowrap;
}
.statright .sep:first-child{
    margin-right:31px;
}
.dots{
    width:26px;
    height:12px;
}
.find{
    width:40px;
    height:23px;
    border:1px solid #b0b4b8;
    border-radius:3px;
    background:linear-gradient(#fdfdfd,#e2e4e6);
}
.find svg{
    width:18px;
    height:16px;
}
.pick{
    position:relative;
    width:166px;
    margin-left:25px;
}
.pick select{
    appearance:none;
    width:100%;
    height:20px;
    padding:0 4px;
    border:1px solid #b4b8bc;
    border-radius:0;
    background:linear-gradient(#b4b8bc,#b4b8bc) right 14px top/1px 100% no-repeat #f8f9fa;
    font:inherit;
    color:inherit;
}
.pick .arrow{
    position:absolute;
    right:3px;
    top:6px;
    pointer-events:none;
}
```
